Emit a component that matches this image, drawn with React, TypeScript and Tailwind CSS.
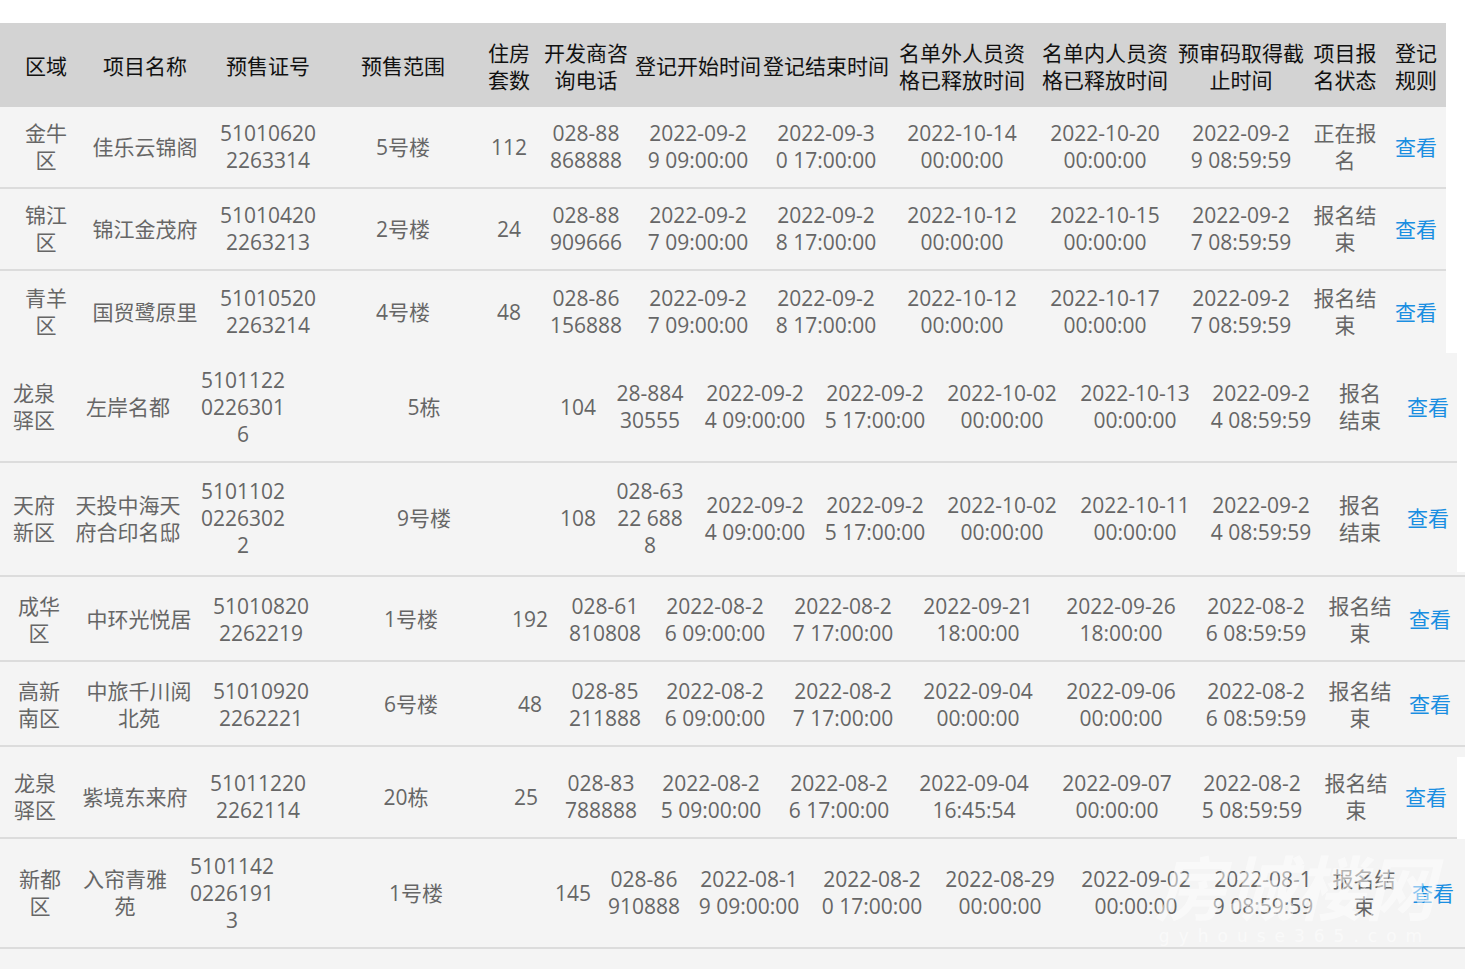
const font = { fontFamily: '"Open Sans", "Noto Sans CJK SC", sans-serif' };

type Row = string[];

const headers: Row = [
  "区域",
  "项目名称",
  "预售证号",
  "预售范围",
  "住房\n套数",
  "开发商咨\n询电话",
  "登记开始时间",
  "登记结束时间",
  "名单外人员资\n格已释放时间",
  "名单内人员资\n格已释放时间",
  "预审码取得截\n止时间",
  "项目报\n名状态",
  "登记\n规则",
];

const seg1: Row[] = [
  ["金牛\n区", "佳乐云锦阁", "51010620\n2263314", "5号楼", "112", "028-88\n868888", "2022-09-2\n9 09:00:00", "2022-09-3\n0 17:00:00", "2022-10-14\n00:00:00", "2022-10-20\n00:00:00", "2022-09-2\n9 08:59:59", "正在报\n名", "查看"],
  ["锦江\n区", "锦江金茂府", "51010420\n2263213", "2号楼", "24", "028-88\n909666", "2022-09-2\n7 09:00:00", "2022-09-2\n8 17:00:00", "2022-10-12\n00:00:00", "2022-10-15\n00:00:00", "2022-09-2\n7 08:59:59", "报名结\n束", "查看"],
  ["青羊\n区", "国贸鹭原里", "51010520\n2263214", "4号楼", "48", "028-86\n156888", "2022-09-2\n7 09:00:00", "2022-09-2\n8 17:00:00", "2022-10-12\n00:00:00", "2022-10-17\n00:00:00", "2022-09-2\n7 08:59:59", "报名结\n束", "查看"],
];

const seg2: Row[] = [
  ["龙泉\n驿区", "左岸名都", "5101122\n0226301\n6", "5栋", "104", "28-884\n30555", "2022-09-2\n4 09:00:00", "2022-09-2\n5 17:00:00", "2022-10-02\n00:00:00", "2022-10-13\n00:00:00", "2022-09-2\n4 08:59:59", "报名\n结束", "查看"],
  ["天府\n新区", "天投中海天\n府合印名邸", "5101102\n0226302\n2", "9号楼", "108", "028-63\n22 688\n8", "2022-09-2\n4 09:00:00", "2022-09-2\n5 17:00:00", "2022-10-02\n00:00:00", "2022-10-11\n00:00:00", "2022-09-2\n4 08:59:59", "报名\n结束", "查看"],
];

const seg3: Row[] = [
  ["成华\n区", "中环光悦居", "51010820\n2262219", "1号楼", "192", "028-61\n810808", "2022-08-2\n6 09:00:00", "2022-08-2\n7 17:00:00", "2022-09-21\n18:00:00", "2022-09-26\n18:00:00", "2022-08-2\n6 08:59:59", "报名结\n束", "查看"],
  ["高新\n南区", "中旅千川阅\n北苑", "51010920\n2262221", "6号楼", "48", "028-85\n211888", "2022-08-2\n6 09:00:00", "2022-08-2\n7 17:00:00", "2022-09-04\n00:00:00", "2022-09-06\n00:00:00", "2022-08-2\n6 08:59:59", "报名结\n束", "查看"],
];

const row8: Row = ["龙泉\n驿区", "紫境东来府", "51011220\n2262114", "20栋", "25", "028-83\n788888", "2022-08-2\n5 09:00:00", "2022-08-2\n6 17:00:00", "2022-09-04\n16:45:54", "2022-09-07\n00:00:00", "2022-08-2\n5 08:59:59", "报名结\n束", "查看"];

const row9: Row = ["新都\n区", "入帘青雅\n苑", "5101142\n0226191\n3", "1号楼", "145", "028-86\n910888", "2022-08-1\n9 09:00:00", "2022-08-2\n0 17:00:00", "2022-08-29\n00:00:00", "2022-09-02\n00:00:00", "2022-08-1\n9 08:59:59", "报名结\n束", "查看"];

function Cell({ text, head, link }: { text: string; head?: boolean; link?: boolean }) {
  return (
    <div
      className={`flex flex-col items-center justify-center ${
        head ? "text-[#111]" : link ? "text-[#1a8ee1]" : "text-[#666]"
      }`}
    >
      {text.split("\n").map((line, i) => (
        <span key={i} className="whitespace-nowrap">
          {line}
        </span>
      ))}
    </div>
  );
}

function TableRow({ row, cols, className, head }: { row: Row; cols: string; className: string; head?: boolean }) {
  return (
    <div className={`grid ${cols} ${className}`}>
      {row.map((text, i) => (
        <Cell key={i} text={text} head={head} link={!head && i === row.length - 1} />
      ))}
    </div>
  );
}

export default function App() {
  const c1 = "grid-cols-[64px_134px_112px_158px_54px_100px_124px_132px_140px_146px_126px_82px_60px]";
  const c2 = "grid-cols-[66px_122px_108px_254px_54px_90px_120px_120px_134px_132px_120px_78px_58px]";
  const c3 = "grid-cols-[78px_122px_122px_178px_60px_90px_130px_126px_144px_142px_128px_80px_60px]";
  const c4 = "grid-cols-[70px_130px_116px_180px_60px_90px_130px_126px_144px_142px_128px_80px_60px]";
  const c5 = "grid-cols-[78px_92px_122px_246px_68px_74px_136px_110px_146px_126px_128px_74px_64px]";

  return (
    <div className="relative h-[969px] w-[1465px] overflow-hidden bg-white text-[21px] leading-[27px]" style={font}>
      <div className="h-[23px]" />

      {/* first block: header + 3 rows */}
      <div className="w-[1446px] bg-[#f4f4f4]">
        <TableRow row={headers} cols={c1} head className="h-[84px] bg-[#d3d3d3] pl-[14px] pt-[3px]" />
        {seg1.map((r, i) => (
          <TableRow
            key={i}
            row={r}
            cols={c1}
            className={`h-[82px] pl-[14px] ${i < 2 ? "border-b-2 border-[#dcdcdc]" : ""}`}
          />
        ))}
      </div>

      <div className="w-[1457px] bg-[#f4f4f4]">
        <TableRow row={seg2[0]} cols={c2} className="h-[110px] border-b-2 border-[#dcdcdc] pl-px" />
        <TableRow row={seg2[1]} cols={c2} className="h-[109px] pl-px pt-[2px]" />
      </div>

      <div className="w-[1465px] bg-[#f4f4f4]">
        <div className="h-[5px] border-b-2 border-[#dcdcdc]" />
        {seg3.map((r, i) => (
          <TableRow key={i} row={r} cols={c3} className="h-[85px] border-b-2 border-[#dcdcdc] pt-[2px]" />
        ))}
        <div className="h-[10px]" />
      </div>

      <div className="w-[1457px] bg-[#f4f4f4]">
        <TableRow row={row8} cols={c4} className="h-[82px] border-b-2 border-[#dcdcdc]" />
      </div>

      <div className="relative w-[1465px] bg-[#f4f4f4]">
        <TableRow row={row9} cols={c5} className="h-[110px] border-b-2 border-[#dcdcdc] pl-px" />
        <div className="h-[20px]" />
        <div className="pointer-events-none absolute left-[1150px] top-[10px] flex w-[290px] flex-col items-center text-white opacity-50">
          <span className="text-[70px] font-bold italic leading-[78px]">房城楼网</span>
          <span
            className="text-[17px] leading-[18px] tracking-[9px]"
            style={{ fontFamily: '"DejaVu Sans", sans-serif' }}
          >
            gyhouse365.com
          </span>
        </div>
      </div>
    </div>
  );
}
